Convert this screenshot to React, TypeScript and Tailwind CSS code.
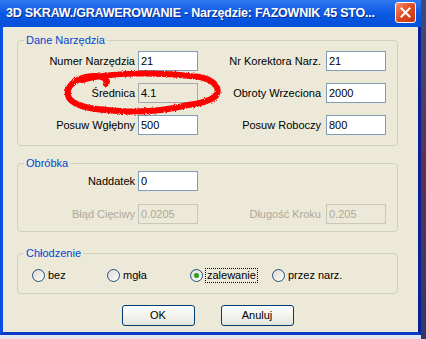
import React from 'react';

type FieldMode = 'normal' | 'readonly' | 'disabled';

function Field({ value, mode = 'normal' }: { value: string; mode?: FieldMode }) {
  const look =
    mode === 'disabled'
      ? 'border-[#c9c7ba] bg-[#ece9d8] text-[#aca899]'
      : mode === 'readonly'
        ? 'border-[#a7a6aa] bg-[#ece9d8] text-black'
        : 'border-[#7f9db9] bg-white text-black';
  return <div className={`h-[20px] w-[60px] border px-[2px] text-[11px] leading-[18px] ${look}`}>{value}</div>;
}

function Label({ text, disabled }: { text: string; disabled?: boolean }) {
  return <div className={`pr-[3px] text-right text-[11px] leading-[20px] ${disabled ? 'text-[#aca899]' : 'text-black'}`}>{text}</div>;
}

function Group({ title, className, children }: { title: string; className?: string; children: React.ReactNode }) {
  return <div className={`rounded-[4px] border border-[#d0d0bf] ${className ?? ''}`}>
      <span className="-mt-[7px] ml-[6px] block w-fit bg-[#ece9d8] px-[2px] text-[11px] leading-[13px] text-[#0046d5]">{title}</span>
      {children}
    </div>;
}

function Radio({ label, checked, focused, width }: { label: string; checked?: boolean; focused?: boolean; width: string }) {
  return <div className={`flex items-center gap-[2px] ${width}`}>
      <span className="flex h-[13px] w-[13px] items-center justify-center rounded-full border border-[#1c5180] bg-gradient-to-br from-[#dcdad0] to-white">
        {checked && <span className="h-[5px] w-[5px] rounded-full bg-[#21a121]" />}
      </span>
      <span className={`text-[11px] leading-[13px] text-black ${focused ? 'border border-dotted border-black px-[1px]' : 'border border-transparent'}`}>{label}</span>
    </div>;
}

function XpButton({ text }: { text: string }) {
  return <button className="h-[21px] w-[73px] rounded-[3px] border border-[#003c74] bg-gradient-to-b from-white to-[#e6e5dc] text-[11px] text-black">{text}</button>;
}

export default function App() {
  return <div className="relative flex h-[339px] w-[426px] overflow-hidden bg-[#e3e6ee] font-['Liberation_Sans',Arial,sans-serif]">
      <div className="flex h-[335px] w-[421px] flex-col">
        {/* title bar */}
        <div className="flex h-[27px] items-center justify-between bg-gradient-to-b from-[#2f78f0] via-[#0a58e4] to-[#0650d8] pl-[6px] pr-[5px]">
          <span className="text-[12.5px] font-bold tracking-[-0.2px] text-white [text-shadow:1px_1px_0_#0a2a8a]">3D SKRAW./GRAWEROWANIE - Narzędzie: FAZOWNIK 45 STO...</span>
          <span className="mb-[3px] flex h-[21px] w-[21px] items-center justify-center rounded-[3px] border border-white bg-gradient-to-br from-[#f08b6e] via-[#e0491f] to-[#c43414]">
            <svg width="11" height="11" viewBox="0 0 11 11">
              <path d="M1.5 1.5 L9.5 9.5 M9.5 1.5 L1.5 9.5" stroke="white" strokeWidth="2" strokeLinecap="square" />
            </svg>
          </span>
        </div>
        {/* body */}
        <div className="flex flex-1 border-x-[3px] border-b-[3px] border-l-[#0a4fe0] border-r-[#0a1f9a] border-b-[#0a3bc6] bg-[#ece9d8]">
          <div className="ml-[14px] mt-[13px] flex w-[381px] flex-col">
            <Group title="Dane Narzędzia" className="pb-[10px]">
              <div className="mt-[4px] grid grid-cols-[120px_60px_128px_60px] gap-y-[12px]">
                <Label text="Numer Narzędzia" />
                <Field value="21" />
                <div className="pr-[2px]"><Label text="Nr Korektora Narz." /></div>
                <Field value="21" />
                <Label text="Średnica" />
                <Field value="4.1" mode="readonly" />
                <div className="pr-[2px]"><Label text="Obroty Wrzeciona" /></div>
                <Field value="2000" />
                <Label text="Posuw Wgłębny" />
                <Field value="500" />
                <div className="pr-[2px]"><Label text="Posuw Roboczy" /></div>
                <Field value="800" />
              </div>
            </Group>
            <Group title="Obróbka" className="mt-[17px] pb-[7px]">
              <div className="mt-[1px] grid grid-cols-[120px_60px_128px_60px] gap-y-[13px]">
                <Label text="Naddatek" />
                <Field value="0" />
                <div />
                <div />
                <Label text="Błąd Cięciwy" disabled />
                <Field value="0.0205" mode="disabled" />
                <div className="pr-[2px]"><Label text="Długość Kroku" disabled /></div>
                <Field value="0.205" mode="disabled" />
              </div>
            </Group>
            <Group title="Chłodzenie" className="mt-[21px] pb-[10px]">
              <div className="mt-[8px] flex pl-[14px]">
                <Radio label="bez" width="w-[75px]" />
                <Radio label="mgła" width="w-[83px]" />
                <Radio label="zalewanie" checked focused width="w-[82px]" />
                <Radio label="przez narz." width="w-[90px]" />
              </div>
            </Group>
            <div className="mt-[11px] flex justify-center gap-[26px]">
              <XpButton text="OK" />
              <XpButton text="Anuluj" />
            </div>
          </div>
        </div>
      </div>
      <div className="h-full w-[5px] bg-gradient-to-b from-[#3a4a7a] via-[#5a3050] to-[#2a3a6a]" />
      {/* red marker scribble drawn over the dialog */}
      <svg className="pointer-events-none absolute left-0 top-0" width="426" height="339" viewBox="0 0 426 339">
        <defs>
          <filter id="rough" x="-10%" y="-10%" width="120%" height="120%">
            <feTurbulence type="fractalNoise" baseFrequency="0.9" numOctaves="2" result="n" />
            <feDisplacementMap in="SourceGraphic" in2="n" scale="3" />
          </filter>
        </defs>
        <path d="M82 80 C110 72 160 72 200 77 C214 80 221 88 216 96 C208 102 198 104 188 105 C172 109 150 113 120 111 C95 110 75 107 69 98 C65 89 71 81 86 77 C100 74 110 79 106 84" fill="none" stroke="#ff0000" strokeWidth="6" strokeLinecap="round" strokeLinejoin="round" filter="url(#rough)" />
      </svg>
    </div>;
}
